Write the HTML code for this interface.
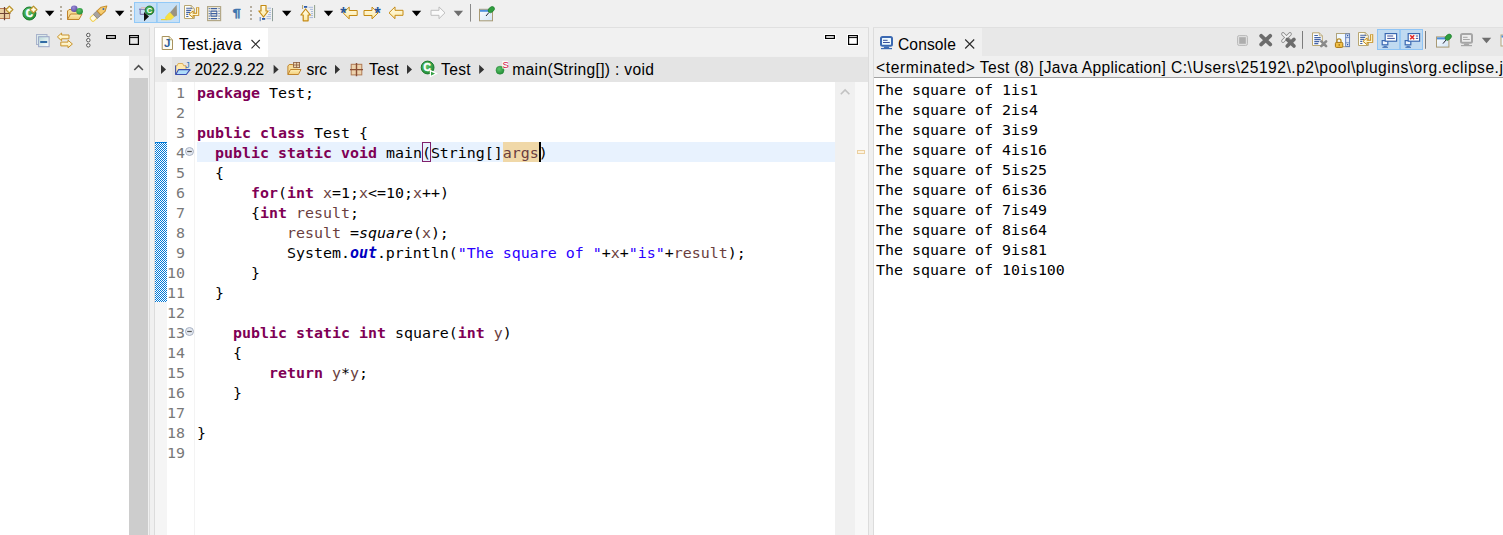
<!DOCTYPE html>
<html><head><meta charset="utf-8"><title>Eclipse</title>
<style>
*{box-sizing:border-box;margin:0;padding:0}
html,body{width:1503px;height:535px;overflow:hidden;background:#f0f0f0}
body{position:relative;font-family:"Liberation Sans",sans-serif;font-size:15.6px;color:#000}
.abs{position:absolute}
.ui{position:absolute;white-space:pre;line-height:20px;height:20px;color:#000}
.code,.con{position:absolute;font-family:"DejaVu Sans Mono","Liberation Mono",monospace;font-size:14.95px;line-height:20px;color:#000}
.code div,.con div{height:20px;white-space:pre}
.kw{color:#7f0055;font-weight:bold}
.str{color:#2a00ff}
.lv{color:#6a3e3e}
.sf{color:#0000c0;font-weight:bold;font-style:italic}
.it{font-style:italic}
.ln{position:absolute;font-family:"DejaVu Sans Mono","Liberation Mono",monospace;font-size:14.95px;line-height:20px;color:#787878;text-align:right}
.ln div{height:20px}
</style></head><body>
<!-- main toolbar -->
<div class="abs" style="left:0;top:0;width:1503px;height:27px;background:#f0f0f0"></div>

<!-- left panel -->
<div class="abs" style="left:0;top:27px;width:150px;height:29px;background:#e8e8e8"></div>
<div class="abs" style="left:0;top:56px;width:150px;height:479px;background:#fff"></div>
<div class="abs" style="left:129px;top:56px;width:19px;height:22px;background:#f0f0f0"></div>
<div class="abs" style="left:129px;top:78px;width:19px;height:457px;background:#cdcdcd"></div>
<div class="abs" style="left:148px;top:56px;width:2px;height:479px;background:#f0f0f0"></div>
<div class="abs" style="left:149px;top:27px;width:1px;height:508px;background:#dcdcdc"></div>

<!-- editor panel -->
<div class="abs" style="left:155px;top:27px;width:714px;height:29px;background:#f1f1f1"></div>
<div class="abs" style="left:155px;top:27px;width:113px;height:30px;background:#fff"></div>
<div class="abs" style="left:155px;top:57px;width:714px;height:25px;background:#e4e4e4"></div>
<div class="abs" style="left:155px;top:57px;width:17px;height:25px;background:#ebebeb"></div>
<div class="abs" style="left:155px;top:82px;width:714px;height:453px;background:#fff"></div>
<!-- gutter -->
<div class="abs" style="left:155px;top:82px;width:12px;height:453px;background:#f5f5f5"></div>
<div class="abs" style="left:155px;top:142px;width:12px;height:160px;background:repeating-conic-gradient(#0078d7 0% 25%,#fff 0% 50%) 0 0/2px 2px"></div>
<div class="abs" style="left:155px;top:142px;width:12px;height:1px;background:#0078d7"></div>
<div class="abs" style="left:194px;top:82px;width:1px;height:453px;background:#f3f3f3"></div>
<!-- current line -->
<div class="abs" style="left:197px;top:142px;width:638px;height:20px;background:#e8f2fe"></div>
<!-- scrollbar + overview -->
<div class="abs" style="left:835px;top:82px;width:20px;height:453px;background:#f0f0f0"></div>
<div class="abs" style="left:855px;top:82px;width:13px;height:453px;background:#f8f8f8"></div>
<div class="abs" style="left:868px;top:27px;width:1px;height:508px;background:#dcdcdc"></div>

<div class="abs" style="left:0;top:27px;width:150px;height:1px;background:#e0e0e0"></div>
<div class="abs" style="left:154px;top:27px;width:715px;height:1px;background:#e0e0e0"></div>
<div class="abs" style="left:154px;top:27px;width:1px;height:508px;background:#dcdcdc"></div>
<div class="ui" style="left:179px;top:35px;letter-spacing:.15px">Test.java</div>
<div class="ui" style="left:194.5px;top:60px;letter-spacing:.05px">2022.9.22</div>
<div class="ui" style="left:306.5px;top:60px;letter-spacing:-.13px">src</div>
<div class="ui" style="left:369px;top:60px;letter-spacing:.35px">Test</div>
<div class="ui" style="left:441px;top:60px;letter-spacing:.35px">Test</div>
<div class="ui" style="left:512.3px;top:60px;letter-spacing:.32px">main(String[]) : void</div>

<div class="ln" style="left:160px;top:83px;width:25px">
<div>1</div><div>2</div><div>3</div><div>4</div><div>5</div><div>6</div><div>7</div><div>8</div><div>9</div><div>10</div><div>11</div><div>12</div><div>13</div><div>14</div><div>15</div><div>16</div><div>17</div><div>18</div><div>19</div>
</div>
<div class="abs" style="left:503px;top:142px;width:36px;height:20px;background:#f0d8a8"></div>
<div class="abs" style="left:422px;top:142px;width:9px;height:20px;border:1px solid #80206c"></div>
<div class="abs" style="left:539px;top:142px;width:2px;height:20px;background:#000"></div>
<div class="code" style="left:197px;top:83px">
<div><span class="kw">package</span> Test;</div>
<div> </div>
<div><span class="kw">public</span> <span class="kw">class</span> Test {</div>
<div>  <span class="kw">public</span> <span class="kw">static</span> <span class="kw">void</span> main(String[]<span class="lv">args</span>)</div>
<div>  {</div>
<div>      <span class="kw">for</span>(<span class="kw">int</span> <span class="lv">x</span>=1;<span class="lv">x</span>&lt;=10;<span class="lv">x</span>++)</div>
<div>      {<span class="kw">int</span> <span class="lv">result</span>;</div>
<div>          <span class="lv">result</span> =<span class="it">square</span>(<span class="lv">x</span>);</div>
<div>          System.<span class="sf">out</span>.println(<span class="str">"The square of "</span>+<span class="lv">x</span>+<span class="str">"is"</span>+<span class="lv">result</span>);</div>
<div>      }</div>
<div>  }</div>
<div> </div>
<div>    <span class="kw">public</span> <span class="kw">static</span> <span class="kw">int</span> square(<span class="kw">int</span> <span class="lv">y</span>)</div>
<div>    {</div>
<div>        <span class="kw">return</span> <span class="lv">y</span>*<span class="lv">y</span>;</div>
<div>    }</div>
<div> </div>
<div>}</div>
<div> </div>
</div>

<!-- console panel -->
<div class="abs" style="left:873px;top:27px;width:630px;height:29px;background:#e8e8e8"></div>
<div class="abs" style="left:873px;top:27px;width:109px;height:29px;background:#f0f0f0"></div>
<div class="abs" style="left:873px;top:56px;width:630px;height:22px;background:#f0f0f0"></div>
<div class="abs" style="left:873px;top:77px;width:630px;height:1px;background:#a0a0a0"></div>
<div class="abs" style="left:873px;top:78px;width:630px;height:457px;background:#fff"></div>
<div class="abs" style="left:873px;top:27px;width:1px;height:508px;background:#dcdcdc"></div>
<div class="abs" style="left:873px;top:27px;width:630px;height:1px;background:#e0e0e0"></div>
<div class="ui" style="left:898px;top:35px;letter-spacing:.1px">Console</div>
<div class="ui" style="left:876px;top:58px"><span style="letter-spacing:.63px">&lt;terminated&gt;</span><span style="letter-spacing:.32px"> Test (8) [Java Application]</span><span style="letter-spacing:.51px"> C:\Users\25192\.p2\pool\plugins\org.eclipse.justj.openjdk</span></div>
<div class="con" style="left:876px;top:80px">
<div>The square of 1is1</div>
<div>The square of 2is4</div>
<div>The square of 3is9</div>
<div>The square of 4is16</div>
<div>The square of 5is25</div>
<div>The square of 6is36</div>
<div>The square of 7is49</div>
<div>The square of 8is64</div>
<div>The square of 9is81</div>
<div>The square of 10is100</div>
</div>
<svg class="abs" style="left:0;top:0" width="1503" height="535" viewBox="0 0 1503 535">
<defs>
<linearGradient id="gy" x1="0" y1="0" x2="0" y2="1"><stop offset="0" stop-color="#fffdec"/><stop offset="1" stop-color="#fce9a4"/></linearGradient>
<linearGradient id="gf" x1="0" y1="0" x2="0" y2="1"><stop offset="0" stop-color="#fdeeb8"/><stop offset="1" stop-color="#f3cf7a"/></linearGradient>
<radialGradient id="gg" cx="0.4" cy="0.35" r="0.7"><stop offset="0" stop-color="#5cc46a"/><stop offset="1" stop-color="#1f8a33"/></radialGradient>
<radialGradient id="gp" cx="0.4" cy="0.35" r="0.7"><stop offset="0" stop-color="#9a8cd8"/><stop offset="1" stop-color="#5a48a0"/></radialGradient>
<linearGradient id="gw" x1="0" y1="0" x2="1" y2="1"><stop offset="0" stop-color="#ffffff"/><stop offset="1" stop-color="#cfe3f5"/></linearGradient>
<linearGradient id="gt" x1="0" y1="0" x2="1" y2="1"><stop offset="0" stop-color="#b8d8d8"/><stop offset="1" stop-color="#ffffff"/></linearGradient>
</defs>
<g><rect x="-3" y="8.5" width="12.6" height="10" fill="#ecd0a4" stroke="#b87a54" stroke-width="1"/><path d="M4.5 7v13.2M-3 13.5h13.4" stroke="#704434" stroke-width="1.2" fill="none"/></g>
<polygon points="9.4,6.1 12.9,9.6 9.4,13.1 5.9,9.6" fill="#f3e2a0" stroke="#b8902a" stroke-width="1.2" stroke-linejoin="round"/><path d="M7.5 9.6h3.8M9.4 7.699999999999999v3.8" stroke="#fffbe8" stroke-width="1.2"/>
<circle cx="29.4" cy="13.5" r="6.5" fill="url(#gg)" stroke="#1a7a2c" stroke-width="1"/>
<text x="29.5" y="17.3" font-family="Liberation Sans,sans-serif" font-weight="bold" font-size="10.2" fill="#fff" stroke="#fff" stroke-width=".5" text-anchor="middle">C</text>
<polygon points="33.5,6.1 37.0,9.6 33.5,13.1 30.0,9.6" fill="#f3e2a0" stroke="#b8902a" stroke-width="1.2" stroke-linejoin="round"/><path d="M31.6 9.6h3.8M33.5 7.699999999999999v3.8" stroke="#fffbe8" stroke-width="1.2"/>
<polygon points="45,10.8 54.4,10.8 49.7,16.200000000000003" fill="#000"/>
<rect x="60" y="6" width="2" height="2" fill="#b5ad9e"/>
<rect x="60" y="10" width="2" height="2" fill="#b5ad9e"/>
<rect x="60" y="14" width="2" height="2" fill="#b5ad9e"/>
<rect x="60" y="18" width="2" height="2" fill="#b5ad9e"/>
<path d="M67.5 19.5v-8.5l1.5-1.5h4l1 1.5h6v2" fill="#f7dc98" stroke="#c0842c" stroke-width="1"/>
<path d="M67.5 19.5l3-5.5h11.5l-3 5.5z" fill="url(#gf)" stroke="#c0842c" stroke-width="1" stroke-linejoin="round"/>
<circle cx="74.2" cy="8.7" r="3.3" fill="url(#gp)"/><circle cx="79.6" cy="11.3" r="3.3" fill="url(#gg)"/>
<g transform="translate(99 13) rotate(-42)"><rect x="-10.5" y="-2.6" width="6" height="5.2" rx="1.5" fill="#fffbe8" stroke="#f0d050" stroke-width="1"/><rect x="-5" y="-2.9" width="5" height="5.8" fill="#a8a4a0" stroke="#8a8680" stroke-width=".8"/><path d="M0 -2.9h5.5l5 2.9-5 2.9H0z" fill="#f5cc70" stroke="#c89030" stroke-width="1" stroke-linejoin="round"/><circle cx="6" cy="0" r="1" fill="#3a68b8"/></g>
<polygon points="115,10.8 124.4,10.8 119.7,16.200000000000003" fill="#000"/>
<rect x="130" y="6" width="2" height="2" fill="#b5ad9e"/>
<rect x="130" y="10" width="2" height="2" fill="#b5ad9e"/>
<rect x="130" y="14" width="2" height="2" fill="#b5ad9e"/>
<rect x="130" y="18" width="2" height="2" fill="#b5ad9e"/>
<rect x="134.5" y="2.5" width="45" height="20" fill="#c6e0f6" stroke="#92c9f7" stroke-width="1"/><path d="M156.9 2.5v20" stroke="#92c9f7" stroke-width="1.6"/>
<path d="M139 9.2h7.2M140.2 9.4v4.9h5" fill="none" stroke="#7564a6" stroke-width="1"/><path d="M141.4 8.6v-1.1h3.8v1.1" fill="#f6dcd2" stroke="#d8b0b0" stroke-width=".7"/>
<polygon points="144,12.1 144,21.2 149,16.6" fill="#111"/>
<circle cx="149.5" cy="10.4" r="4.4" fill="url(#gg)" stroke="#166a26" stroke-width=".8"/><text x="149.4" y="13.2" font-family="Liberation Sans,sans-serif" font-weight="bold" font-size="7.6" fill="#fff" text-anchor="middle">C</text>
<polygon points="176.7,4.8 177,15.6 174,16.9 170,12.6" fill="#999382"/><polygon points="170,12.6 174,16.9 171,19.6 166,19.9 165.4,17.2 168.6,13.4" fill="#f8e040" stroke="#ecd02a" stroke-width=".5"/><path d="M161 19.6h5.4" stroke="#f2d424" stroke-width="1.1"/>
<g transform="translate(184 5)"><path d="M.5 .5h6.7l3.2 3.2v9.8h-9.9z" fill="#fffef4" stroke="#b8a672" stroke-width="1"/><path d="M7.2 .5v3.2h3.2" fill="none" stroke="#b8a672" stroke-width=".8"/><path d="M2.2 3.3h6M2.2 5.4h5M2.2 7.4h4M2.2 9.4h2.2M2.2 11.5h2.2" stroke="#4564a6" stroke-width="1.1"/><path d="M13.7 2.2v7.1h-5" fill="none" stroke="#c58a12" stroke-width="3" stroke-linejoin="miter"/><polygon points="5,9.3 9.2,5.8 9.2,12.8" fill="#fff6d2" stroke="#c58a12" stroke-width="1" stroke-linejoin="round"/><path d="M13.7 2.7v6.6h-5.5" fill="none" stroke="#fff6d2" stroke-width="1.2"/></g>
<rect x="207.6" y="6.6" width="13" height="14" fill="#f8f5ea" stroke="#b3a888" stroke-width="1.2"/>
<path d="M210.6 8.6h6.6M210.6 11.1h6.6M210.6 13.6h6.6M210.6 16.1h6.6M210.6 18.6h6.6" stroke="#3d5f9f" stroke-width="1.1"/><path d="M211 11v5.2M216.8 11v5.2" stroke="#3d5f9f" stroke-width=".9"/>
<rect x="208.7" y="8.049999999999999" width="1.1" height="1.1" fill="#3d5f9f"/><rect x="218.5" y="8.049999999999999" width="1.1" height="1.1" fill="#3d5f9f"/>
<rect x="208.7" y="10.549999999999999" width="1.1" height="1.1" fill="#3d5f9f"/><rect x="218.5" y="10.549999999999999" width="1.1" height="1.1" fill="#3d5f9f"/>
<rect x="208.7" y="13.049999999999999" width="1.1" height="1.1" fill="#3d5f9f"/><rect x="218.5" y="13.049999999999999" width="1.1" height="1.1" fill="#3d5f9f"/>
<rect x="208.7" y="15.55" width="1.1" height="1.1" fill="#3d5f9f"/><rect x="218.5" y="15.55" width="1.1" height="1.1" fill="#3d5f9f"/>
<rect x="208.7" y="18.05" width="1.1" height="1.1" fill="#3d5f9f"/><rect x="218.5" y="18.05" width="1.1" height="1.1" fill="#3d5f9f"/>
<text transform="translate(232.4 16.6) scale(1.4 1)" font-family="Liberation Sans,sans-serif" font-weight="bold" font-size="10.6" fill="#3f74ad" stroke="#3f74ad" stroke-width=".35">¶</text>
<rect x="250" y="6" width="2" height="2" fill="#b5ad9e"/>
<rect x="250" y="10" width="2" height="2" fill="#b5ad9e"/>
<rect x="250" y="14" width="2" height="2" fill="#b5ad9e"/>
<rect x="250" y="18" width="2" height="2" fill="#b5ad9e"/>
<polygon points="261,5.5 266,5.5 266,11 268.2,11 263.5,17 258.8,11 261,11" fill="url(#gy)" stroke="#c58a12" stroke-width="1.2" stroke-linejoin="round"/>
<path d="M267.5 8.2h3.5M269 10.4h2M269 12.5h2M268 14.6h3M266.5 16.6h4.5M266.5 18.7h4.5" stroke="#a9bbdc" stroke-width="1"/><rect x="262" y="18" width="3.2" height="1.8" fill="#2c5aa8"/><path d="M260.2 17v4.2" stroke="#5b7cae" stroke-width="1"/><path d="M272.5 8v13.2" stroke="#8f9f9a" stroke-width="1"/>
<polygon points="282,10.8 291.4,10.8 286.7,16.200000000000003" fill="#000"/>
<polygon points="305.6,9 310.4,15 308.1,15 308.1,20.8 303.2,20.8 303.2,15 300.9,15" fill="url(#gy)" stroke="#c58a12" stroke-width="1.2" stroke-linejoin="round"/>
<rect x="304" y="6" width="3.2" height="1.8" fill="#2c5aa8"/><path d="M308.5 7.3h4.5M310 9.4h3M311 11.5h2M311 13.6h2M311 15.6h2M309.5 17.6h3.5" stroke="#a9bbdc" stroke-width="1"/><path d="M302.6 5v4" stroke="#b5a468" stroke-width="1"/><path d="M314.6 5v13" stroke="#8f9f8a" stroke-width="1"/>
<polygon points="323.8,10.8 333.2,10.8 328.5,16.200000000000003" fill="#000"/>
<polygon points="343.2,13 349.2,7.1 349.2,10.5 357.2,10.5 357.2,15.5 349.2,15.5 349.2,18.9" fill="url(#gy)" stroke="#c58a12" stroke-width="1" stroke-linejoin="round"/>
<text x="340.2" y="18.6" font-family="Liberation Sans,sans-serif" font-weight="bold" font-size="16" fill="#27569a">*</text>
<polygon points="378,13 372,7.1 372,10.5 364,10.5 364,15.5 372,15.5 372,18.9" fill="url(#gy)" stroke="#c58a12" stroke-width="1" stroke-linejoin="round"/>
<text x="374.4" y="18.6" font-family="Liberation Sans,sans-serif" font-weight="bold" font-size="16" fill="#27569a">*</text>
<polygon points="389,12.8 395,6.9 395,10.3 403,10.3 403,15.3 395,15.3 395,18.700000000000003" fill="url(#gy)" stroke="#c58a12" stroke-width="1" stroke-linejoin="round"/>
<polygon points="411.8,10.8 421.2,10.8 416.5,16.200000000000003" fill="#000"/>
<polygon points="445,12.8 439,6.9 439,10.3 431,10.3 431,15.3 439,15.3 439,18.700000000000003" fill="#fafafa" stroke="#bdbdbd" stroke-width="1" stroke-linejoin="round"/>
<polygon points="453.7,10.8 463.09999999999997,10.8 458.4,16.200000000000003" fill="#6e6e6e"/>
<path d="M470.5 4v17.6" stroke="#8a8a8a" stroke-width="1"/>
<rect x="479.5" y="9.3" width="13" height="11.5" fill="url(#gw)" stroke="#a99a74" stroke-width="1"/><rect x="480" y="9.8" width="12" height="2" fill="#4d8fdc"/>
<path d="M489 12.4l-3 3.6" stroke="#223" stroke-width="1"/><ellipse cx="491.3" cy="9.600000000000001" rx="3.6" ry="2.5" transform="rotate(-42 491.3 9.600000000000001)" fill="#2f9e3e" stroke="#1c7a2a" stroke-width=".6"/>
<rect x="36.5" y="34.5" width="10.5" height="10" fill="#dbe9ea" stroke="#a9b3cb" stroke-width="1"/><rect x="38.6" y="36.7" width="10.5" height="10" fill="url(#gt)" stroke="#9aa5c6" stroke-width="1"/><path d="M40.2 42h7" stroke="#1d5c9c" stroke-width="1.8"/>
<polygon points="57.4,36.9 61.6,33.0 61.6,35.0 69.0,35.0 69.0,38.8 61.6,38.8 61.6,40.8" fill="url(#gy)" stroke="#c8922a" stroke-width="1" stroke-linejoin="round"/>
<polygon points="72.4,44 68.0,40.2 68.0,42.1 60.800000000000004,42.1 60.800000000000004,45.9 68.0,45.9 68.0,47.8" fill="url(#gy)" stroke="#c8922a" stroke-width="1" stroke-linejoin="round"/>
<circle cx="88.3" cy="35" r="1.75" fill="#f6f6f6" stroke="#4a4a4a" stroke-width=".9"/>
<circle cx="88.3" cy="40.2" r="1.75" fill="#f6f6f6" stroke="#4a4a4a" stroke-width=".9"/>
<circle cx="88.3" cy="45.3" r="1.75" fill="#f6f6f6" stroke="#4a4a4a" stroke-width=".9"/>
<rect x="106.6" y="35.6" width="8.8" height="2.8" fill="none" stroke="#000" stroke-width="1.2"/>
<rect x="129.6" y="35.6" width="8.8" height="8.8" fill="none" stroke="#000" stroke-width="1.2"/><path d="M129 37.6h10" stroke="#000" stroke-width="1"/>
<path d="M134.3 70l4.3-4.3 4.3 4.3" fill="none" stroke="#505050" stroke-width="1.6"/>
<path d="M840.8 94.3l4.3-4.3 4.3 4.3" fill="none" stroke="#c2c2c2" stroke-width="1.6"/>
<path d="M162.2 36.5h7l3.3 3.3v9.7h-10.3z" fill="#fffdf3" stroke="#a8935e" stroke-width="1"/><path d="M169.2 36.5v3.3h3.3" fill="#efe6c8" stroke="#a8935e" stroke-width=".8"/>
<text x="167.2" y="47.2" font-family="Liberation Sans,sans-serif" font-weight="bold" font-size="11.5" fill="#2c5d9c" text-anchor="middle">J</text>
<path d="M251.5 40l8.3 8.3M259.8 40l-8.3 8.3" stroke="#2b2b2b" stroke-width="1.1"/>
<rect x="824" y="34" width="12" height="6" fill="#fff"/>
<rect x="825.6" y="35.6" width="8.8" height="2.8" fill="#fff" stroke="#000" stroke-width="1.2"/>
<rect x="847" y="34" width="12" height="12" fill="#fff"/>
<rect x="848.6" y="35.6" width="8.8" height="8.8" fill="#fff" stroke="#000" stroke-width="1.2"/><path d="M848 37.6h10" stroke="#000" stroke-width="1"/>
<polygon points="161,64.8 166,69.4 161,74" fill="#333"/>
<polygon points="273.6,64.8 278.6,69.4 273.6,74" fill="#333"/>
<polygon points="335,64.8 340,69.4 335,74" fill="#333"/>
<polygon points="407,64.8 412,69.4 407,74" fill="#333"/>
<polygon points="479.2,64.8 484.2,69.4 479.2,74" fill="#333"/>
<path d="M175.6 74.3v-8.6h1.6l.9-2.2h4.6l.9 2.2h2.4v4" fill="#ffe9ad" stroke="#d8a850" stroke-width=".9"/><path d="M175.6 65.5v8.9" stroke="#4456a8" stroke-width="1.1"/>
<polygon points="178.6,69.6 190,69.6 186.3,74.5 175.8,74.5" fill="#aedcfa" stroke="#3a4cb0" stroke-width="1.1" stroke-linejoin="round"/>
<text x="184.9" y="67.8" font-family="Liberation Sans,sans-serif" font-size="9.5" fill="#3a78b8">J</text>
<path d="M287.9 74.5v-8.5l1.3-1.5h3.6l1 1.5h5.4v2" fill="#f7dc98" stroke="#c0842c" stroke-width="1"/><path d="M287.9 74.5l2.6-5h10.5l-2.6 5z" fill="url(#gf)" stroke="#c0842c" stroke-width="1" stroke-linejoin="round"/>
<rect x="293.6" y="62.4" width="6" height="5" fill="#edd5b0" stroke="#8a5a3c" stroke-width=".8"/><path d="M296.6 62v5.8M293.2 65h6.8" stroke="#8a5a3c" stroke-width=".8"/>
<rect x="351.2" y="64.3" width="10.6" height="10.6" fill="#ecd2ac" stroke="#b07a54" stroke-width="1"/><path d="M356.5 63v13.2M350 69.6h13" stroke="#8a4e34" stroke-width="1.4"/>
<circle cx="427.6" cy="67.5" r="6.4" fill="url(#gg)" stroke="#1a7a2c" stroke-width="1"/><text x="427.3" y="71.3" font-family="Liberation Sans,sans-serif" font-weight="bold" font-size="10.2" fill="#fff" stroke="#fff" stroke-width=".5" text-anchor="middle">C</text>
<polygon points="430.4,70.6 436.6,73.6 430.4,76.6" fill="#35a045" stroke="#fff" stroke-width="1.2"/>
<circle cx="500" cy="70.2" r="4" fill="url(#gg)" stroke="#2a8a3a" stroke-width=".6"/><rect x="502.3" y="60.8" width="5.8" height="7.8" fill="#fff" opacity=".85"/><text x="502.4" y="68" font-family="Liberation Sans,sans-serif" font-size="9.5" fill="#d01040">S</text>
<circle cx="189.5" cy="151.5" r="4" fill="#e4e9f1" stroke="#a9b2c3" stroke-width="1"/><path d="M187.2 151.5h4.6" stroke="#555" stroke-width="1.2"/>
<circle cx="189.5" cy="331.5" r="4" fill="#e4e9f1" stroke="#a9b2c3" stroke-width="1"/><path d="M187.2 331.5h4.6" stroke="#555" stroke-width="1.2"/>
<rect x="857.5" y="150.5" width="7" height="3" fill="#fdf3e0" stroke="#ebcf9f" stroke-width="1"/>
<rect x="881" y="37" width="11" height="8.8" rx="1.5" fill="#eefaff" stroke="#3b69b2" stroke-width="2"/><path d="M883 40.3h4.6M883 42.5h6.8" stroke="#3a4f9a" stroke-width="1"/><path d="M884.5 46.6h4l1 1.6h-6z" fill="#3b69b2"/><path d="M881 48.6h11" stroke="#3b69b2" stroke-width="1.2"/>
<path d="M965.2 39.5l9 9M974.2 39.5l-9 9" stroke="#2b2b2b" stroke-width="1.1"/>
<rect x="1237.5" y="35.5" width="10" height="10" rx="1.8" fill="#dedede" stroke="#bcbcbc" stroke-width="1"/><rect x="1239.2" y="37.2" width="6.6" height="6.6" fill="#adadad"/>
<path d="M1261.2 35.8l9 8.6M1270.2 35.8l-9 8.6" stroke="#6c6c6c" stroke-width="3.8" stroke-linecap="round"/>
<path d="M1283 34l7 7M1290 34l-7 7" stroke="#8a8a8a" stroke-width="3.6" stroke-linecap="round"/><path d="M1283 34l7 7M1290 34l-7 7" stroke="#f4f4f4" stroke-width="1.8" stroke-linecap="round"/>
<path d="M1287.2 39.4l6.8 6.6M1294 39.4l-6.8 6.6" stroke="#6c6c6c" stroke-width="3.6" stroke-linecap="round"/>
<path d="M1302.5 31v17.8" stroke="#7c7c7c" stroke-width="1"/>
<path d="M1312.5 32.8h6.8l3 3v9.7h-9.8z" fill="#fbfdff" stroke="#b8a672" stroke-width="1"/><path d="M1319.3 32.8v3h3" fill="none" stroke="#b8a672" stroke-width=".8"/><path d="M1314.3 35.5h3.6M1314.3 37.6h6.4M1314.3 39.6h6.4M1314.3 41.6h5M1314.3 43.6h4" stroke="#4564a6" stroke-width="1.1"/><path d="M1321.3 41.3l4.8 4.8M1326.1 41.3l-4.8 4.8" stroke="#8a8a8a" stroke-width="2.6" stroke-linecap="round"/>
<rect x="1336.5" y="33.5" width="13" height="13.2" fill="#f0f8ff" stroke="#b0a47c" stroke-width="1"/><rect x="1345.7" y="33.9" width="3.9" height="12.6" fill="#e4ecf8" stroke="#5878b8" stroke-width=".9"/><path d="M1345.7 37.6h3.9M1345.7 42.8h3.9" stroke="#5878b8" stroke-width=".8"/><rect x="1347" y="35" width="1.3" height="1.3" fill="#2c5aa8"/><rect x="1347" y="44" width="1.3" height="1.3" fill="#2c5aa8"/>
<path d="M1337 42.6v-1.8a2 2 0 0 1 4 0v1.8" fill="none" stroke="#b88a20" stroke-width="1.3"/><rect x="1335.4" y="42.4" width="7.4" height="5" rx="1" fill="#f0c048" stroke="#a87410" stroke-width="1"/><rect x="1338.7" y="44" width=".9" height="1.8" fill="#8a5a08"/>
<g transform="translate(1358 32)"><path d="M.5 .5h6.7l3.2 3.2v9.8h-9.9z" fill="#fffef4" stroke="#b8a672" stroke-width="1"/><path d="M7.2 .5v3.2h3.2" fill="none" stroke="#b8a672" stroke-width=".8"/><path d="M2.2 3.3h6M2.2 5.4h5M2.2 7.4h4M2.2 9.4h2.2M2.2 11.5h2.2" stroke="#4564a6" stroke-width="1.1"/><path d="M13.7 2.2v7.1h-5" fill="none" stroke="#c58a12" stroke-width="3" stroke-linejoin="miter"/><polygon points="5,9.3 9.2,5.8 9.2,12.8" fill="#fff6d2" stroke="#c58a12" stroke-width="1" stroke-linejoin="round"/><path d="M13.7 2.7v6.6h-5.5" fill="none" stroke="#fff6d2" stroke-width="1.2"/></g>
<rect x="1377.5" y="29.5" width="45" height="20" fill="#c0daf1" stroke="#8fc4f5" stroke-width="1"/><path d="M1400 29.5v20" stroke="#8fc4f5" stroke-width="1.6"/>
<rect x="1382.1999999999998" y="40.6" width="5.6" height="4.2" fill="#eef6ff" stroke="#3b69b2" stroke-width="1.2"/><path d="M1383.6 46.3h3.2M1382.3999999999999 47.3h5.6" stroke="#3b69b2" stroke-width="1"/>
<rect x="1385.1999999999998" y="33.6" width="11.4" height="7.6" fill="#fff" stroke="#3b69b2" stroke-width="1.2"/>
<path d="M1387.1999999999998 36h6M1387.1999999999998 38.4h7.6" stroke="#3a4f9a" stroke-width="1"/>
<rect x="1405.1999999999998" y="40.6" width="5.6" height="4.2" fill="#eef6ff" stroke="#3b69b2" stroke-width="1.2"/><path d="M1406.6 46.3h3.2M1405.3999999999999 47.3h5.6" stroke="#3b69b2" stroke-width="1"/>
<rect x="1408.1999999999998" y="33.6" width="11.4" height="7.6" fill="#fff" stroke="#3b69b2" stroke-width="1.2"/>
<path d="M1410.1999999999998 35.2l4 4M1414.1999999999998 35.2l-4 4" stroke="#e02a2a" stroke-width="1.6"/><path d="M1415.8 36h2.4M1415.8 38.4h2.4" stroke="#3a4f9a" stroke-width="1"/>
<path d="M1425.5 31v17.8" stroke="#7c7c7c" stroke-width="1"/>
<rect x="1436.5" y="36.9" width="12.4" height="10.2" fill="url(#gw)" stroke="#a99a74" stroke-width="1"/><rect x="1437" y="37.4" width="11.4" height="2" fill="#4d8fdc"/>
<path d="M1446 40.0l-3 3.6" stroke="#223" stroke-width="1"/><ellipse cx="1448.3" cy="37.199999999999996" rx="3.6" ry="2.5" transform="rotate(-42 1448.3 37.199999999999996)" fill="#2f9e3e" stroke="#1c7a2a" stroke-width=".6"/>
<rect x="1461" y="34" width="11" height="8.8" rx="1.5" fill="#ececec" stroke="#a6a6a6" stroke-width="2"/><path d="M1463 37.3h4.6M1463 39.5h6.8" stroke="#a6a6a6" stroke-width="1"/><path d="M1464.5 43.6h4l1 1.6h-6z" fill="#a6a6a6"/><path d="M1461 45.6h11" stroke="#a6a6a6" stroke-width="1.2"/>
<polygon points="1481.8,37.8 1491.2,37.8 1486.5,43.199999999999996" fill="#6e6e6e"/>
<rect x="1501" y="35" width="4" height="11" fill="#eef4fb" stroke="#b5a67c" stroke-width="1"/><rect x="1501.5" y="35.5" width="3" height="2" fill="#4d8fdc"/>
</svg>
</body></html>
